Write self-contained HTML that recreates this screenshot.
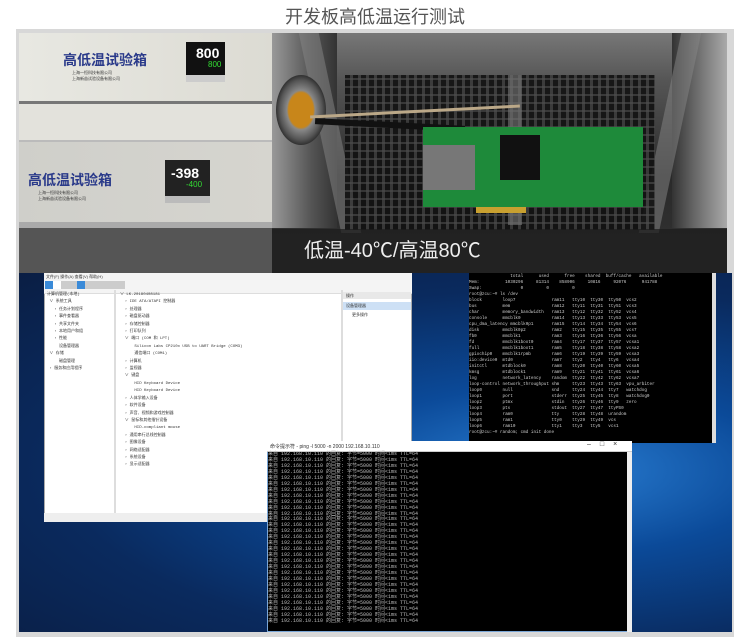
<!DOCTYPE html>
<html><head><meta charset="utf-8"><style>
*{margin:0;padding:0;box-sizing:border-box}
body{width:750px;height:641px;background:#fff;position:relative;overflow:hidden;font-family:"Liberation Sans","Noto Sans CJK SC",sans-serif}
.a{position:absolute}
.t{left:0;width:750px;top:3px;text-align:center;font-size:18px;color:#555}
pre{font-family:"Liberation Mono","Noto Sans CJK SC",monospace;white-space:pre;}
</style></head><body>
<div class="a t">开发板高低温运行测试</div>
<div class="a" style="left:16px;top:29px;width:718px;height:608px;background:#d8d8d8"></div>
<!-- left photo -->
<div class="a" style="left:19px;top:33px;width:253px;height:240px;background:#e2e1da"></div>
<div class="a" style="left:19px;top:33px;width:253px;height:69px;background:linear-gradient(90deg,#e8e8e2,#dcdbd3)"></div>
<div class="a" style="left:19px;top:101px;width:253px;height:3px;background:#777"></div>
<div class="a" style="left:19px;top:104px;width:253px;height:36px;background:#e3e2dc"></div>
<div class="a" style="left:19px;top:140px;width:253px;height:2px;background:#bbb"></div>
<div class="a" style="left:19px;top:142px;width:253px;height:82px;background:linear-gradient(90deg,#cfcfca,#d6d5cf)"></div>
<div class="a" style="left:19px;top:222px;width:253px;height:6px;background:#aaa"></div>
<div class="a" style="left:19px;top:228px;width:253px;height:45px;background:#555"></div>
<div class="a" style="left:63px;top:50px;font-size:14px;font-weight:bold;color:#2a3a8a">高低温试验箱</div>
<div class="a" style="left:72px;top:70px;font-size:4px;color:#333;line-height:6px">上海一恒科技有限公司<br>上海新苗试验设备有限公司</div>
<div class="a" style="left:28px;top:170px;font-size:14px;font-weight:bold;color:#2a3a8a">高低温试验箱</div>
<div class="a" style="left:38px;top:190px;font-size:4px;color:#333;line-height:6px">上海一恒科技有限公司<br>上海新苗试验设备有限公司</div>
<div class="a" style="left:186px;top:42px;width:39px;height:40px;background:#111;border-bottom:7px solid #ccc"></div>
<div class="a" style="left:196px;top:45px;font-size:14px;color:#fff;font-weight:bold">800</div>
<div class="a" style="left:208px;top:60px;font-size:8px;color:#3d3">800</div>
<div class="a" style="left:165px;top:160px;width:45px;height:43px;background:#222;border-bottom:7px solid #bbb"></div>
<div class="a" style="left:171px;top:165px;font-size:14px;color:#fff;font-weight:bold">-398</div>
<div class="a" style="left:186px;top:180px;font-size:8px;color:#3d3">-400</div>
<!-- right photo -->
<div class="a" style="left:272px;top:33px;width:455px;height:240px;background:linear-gradient(180deg,#777 0%,#555 20%,#2a2a2a 60%,#333 100%)"></div>
<div class="a" style="left:272px;top:33px;width:65px;height:195px;background:linear-gradient(90deg,#999,#555 60%,#333)"></div>
<div class="a" style="left:672px;top:33px;width:55px;height:195px;background:linear-gradient(90deg,#333,#666 40%,#aaa)"></div>
<div class="a" style="left:320px;top:33px;width:20px;height:200px;background:#888;opacity:.5;transform:skewX(12deg)"></div>
<div class="a" style="left:660px;top:33px;width:20px;height:200px;background:#888;opacity:.5;transform:skewX(-12deg)"></div>
<div class="a" style="left:345px;top:75px;width:310px;height:155px;background:repeating-linear-gradient(0deg,transparent 0 6px,rgba(80,80,80,.6) 6px 8px),repeating-linear-gradient(90deg,#111 0 5px,#3a3a3a 5px 8px),#222;opacity:.9"></div>
<div class="a" style="left:508px;top:75px;width:14px;height:150px;background:#777;opacity:.6"></div>
<div class="a" style="left:276px;top:75px;width:50px;height:70px;border-radius:50%;background:radial-gradient(#c8861a 35%,#888 40%,#555 60%,#333 70%)"></div>
<div class="a" style="left:310px;top:110px;width:210px;height:3px;background:#bba888;transform:rotate(-3deg)"></div>
<div class="a" style="left:315px;top:122px;width:150px;height:6px;background:#111;transform:rotate(3deg)"></div>
<div class="a" style="left:423px;top:127px;width:220px;height:80px;background:#1e8a3a"></div>
<div class="a" style="left:423px;top:145px;width:52px;height:45px;background:#777"></div>
<div class="a" style="left:500px;top:135px;width:40px;height:45px;background:#111"></div>
<div class="a" style="left:476px;top:207px;width:50px;height:6px;background:#c8a030"></div>
<div class="a" style="left:272px;top:229px;width:455px;height:44px;background:rgba(30,30,30,.75)"></div>
<div class="a" style="left:304px;top:234px;font-size:20px;color:#eee">低温-40℃/高温80℃</div>
<!-- desktop -->
<div class="a" style="left:19px;top:273px;width:713px;height:359px;background:radial-gradient(ellipse at 75% 55%,#2a7fd4 0%,#0b4a99 30%,#0a2a5e 65%,#0a1e44 100%)"></div>
<!-- device manager -->
<div class="a" style="left:44px;top:273px;width:368px;height:249px;background:#fff;border:1px solid #aaa"></div>
<div class="a" style="left:44px;top:273px;width:368px;height:21px;background:#f4f4f4;border-bottom:1px solid #ddd"></div>
<div class="a" style="left:46px;top:274px;font-size:4px;color:#333">文件(F) 操作(A) 查看(V) 帮助(H)</div>
<div class="a" style="left:45px;top:281px;width:80px;height:8px;background:linear-gradient(90deg,#3a8ad8 0 10%,#fff 10% 20%,#ccc 20% 40%,#3a8ad8 40% 50%,#ccc 50%)"></div>
<div class="a" style="left:114px;top:290px;width:2px;height:223px;background:#ddd"></div>
<div class="a" style="left:341px;top:290px;width:2px;height:223px;background:#ddd"></div>
<div class="a" style="left:343px;top:292px;width:68px;height:7px;background:#e8e8e8"></div>
<div class="a" style="left:343px;top:302px;width:68px;height:8px;background:#cde0f5"></div>
<div class="a" style="left:44px;top:513px;width:368px;height:9px;background:#eee"></div>
<pre class="a" style="left:47px;top:292px;font-size:4px;line-height:7.4px;color:#333">计算机管理(本地)
 ∨ 系统工具
   › 任务计划程序
   › 事件查看器
   › 共享文件夹
   › 本地用户和组
   › 性能
     设备管理器
 ∨ 存储
     磁盘管理
 › 服务和应用程序</pre>
<pre class="a" style="left:120px;top:292px;font-size:4px;line-height:7.4px;color:#333">∨ LK-20180408181
  › IDE ATA/ATAPI 控制器
  › 处理器
  › 磁盘驱动器
  › 存储控制器
  › 打印队列
  ∨ 端口 (COM 和 LPT)
      Silicon Labs CP210x USB to UART Bridge (COM3)
      通信端口 (COM1)
  › 计算机
  › 监视器
  ∨ 键盘
      HID Keyboard Device
      HID Keyboard Device
  › 人体学输入设备
  › 软件设备
  › 声音、视频和游戏控制器
  ∨ 鼠标和其他指针设备
      HID-compliant mouse
  › 通用串行总线控制器
  › 图像设备
  › 网络适配器
  › 系统设备
  › 显示适配器</pre>
<div class="a" style="left:346px;top:293px;font-size:4px;color:#333">操作</div>
<div class="a" style="left:346px;top:303px;font-size:4px;color:#333">设备管理器</div>
<div class="a" style="left:352px;top:312px;font-size:4px;color:#333">更多操作</div>
<!-- terminal -->
<div class="a" style="left:469px;top:273px;width:247px;height:170px;background:#000;border-right:4px solid #ddd"></div>
<pre class="a" style="left:469px;top:274px;font-size:4.3px;line-height:6px;color:#ccc">                total      used      free    shared  buff/cache   available
Mem:          1030296     81314    858906     10816     92076      941788
Swap:               0         0         0
root@zcu:~# ls /dev
block        loop7              ram11   tty10  tty30  tty50  vcs2
bus          mem                ram12   tty11  tty31  tty51  vcs3
char         memory_bandwidth   ram13   tty12  tty32  tty52  vcs4
console      mmcblk0            ram14   tty13  tty33  tty53  vcs5
cpu_dma_latency mmcblk0p1       ram15   tty14  tty34  tty54  vcs6
disk         mmcblk0p2          ram2    tty15  tty35  tty55  vcs7
fb0          mmcblk1            ram3    tty16  tty36  tty56  vcsa
fd           mmcblk1boot0       ram4    tty17  tty37  tty57  vcsa1
full         mmcblk1boot1       ram5    tty18  tty38  tty58  vcsa2
gpiochip0    mmcblk1rpmb        ram6    tty19  tty39  tty59  vcsa3
iio:device0  mtd0               ram7    tty2   tty4   tty6   vcsa4
initctl      mtdblock0          ram8    tty20  tty40  tty60  vcsa5
kmsg         mtdblock1          ram9    tty21  tty41  tty61  vcsa6
log          network_latency    random  tty22  tty42  tty62  vcsa7
loop-control network_throughput shm     tty23  tty43  tty63  vpu_arbiter
loop0        null               snd     tty24  tty44  tty7   watchdog
loop1        port               stderr  tty25  tty45  tty8   watchdog0
loop2        ptmx               stdin   tty26  tty46  tty9   zero
loop3        pts                stdout  tty27  tty47  ttyPS0
loop4        ram0               tty     tty28  tty48  urandom
loop5        ram1               tty0    tty29  tty49  vcs
loop6        ram10              tty1    tty3   tty5   vcs1
root@zcu:~# random; cmd init done</pre>
<!-- cmd -->
<div class="a" style="left:267px;top:441px;width:365px;height:191px;background:#000;border:1px solid #7aa7d8"></div>
<div class="a" style="left:267px;top:441px;width:365px;height:11px;background:#fff;border-bottom:1px solid #ccc"></div>
<div class="a" style="left:270px;top:443px;font-size:5px;color:#333">命令提示符 - ping -l 5000 -n 2000 192.168.10.110</div>
<div class="a" style="left:587px;top:441px;font-size:7px;color:#333;letter-spacing:9px">–□×</div>
<div class="a" style="left:627px;top:452px;width:5px;height:180px;background:#eee"></div>
<pre class="a" style="left:268px;top:452px;font-size:5px;line-height:5.95px;color:#bbb">来自 192.168.10.110 的回复: 字节=5000 时间<1ms TTL=64
来自 192.168.10.110 的回复: 字节=5000 时间<1ms TTL=64
来自 192.168.10.110 的回复: 字节=5000 时间<1ms TTL=64
来自 192.168.10.110 的回复: 字节=5000 时间<1ms TTL=64
来自 192.168.10.110 的回复: 字节=5000 时间<1ms TTL=64
来自 192.168.10.110 的回复: 字节=5000 时间<1ms TTL=64
来自 192.168.10.110 的回复: 字节=5000 时间<1ms TTL=64
来自 192.168.10.110 的回复: 字节=5000 时间<1ms TTL=64
来自 192.168.10.110 的回复: 字节=5000 时间<1ms TTL=64
来自 192.168.10.110 的回复: 字节=5000 时间<1ms TTL=64
来自 192.168.10.110 的回复: 字节=5000 时间<1ms TTL=64
来自 192.168.10.110 的回复: 字节=5000 时间<1ms TTL=64
来自 192.168.10.110 的回复: 字节=5000 时间<1ms TTL=64
来自 192.168.10.110 的回复: 字节=5000 时间<1ms TTL=64
来自 192.168.10.110 的回复: 字节=5000 时间<1ms TTL=64
来自 192.168.10.110 的回复: 字节=5000 时间<1ms TTL=64
来自 192.168.10.110 的回复: 字节=5000 时间<1ms TTL=64
来自 192.168.10.110 的回复: 字节=5000 时间<1ms TTL=64
来自 192.168.10.110 的回复: 字节=5000 时间<1ms TTL=64
来自 192.168.10.110 的回复: 字节=5000 时间<1ms TTL=64
来自 192.168.10.110 的回复: 字节=5000 时间<1ms TTL=64
来自 192.168.10.110 的回复: 字节=5000 时间<1ms TTL=64
来自 192.168.10.110 的回复: 字节=5000 时间<1ms TTL=64
来自 192.168.10.110 的回复: 字节=5000 时间<1ms TTL=64
来自 192.168.10.110 的回复: 字节=5000 时间<1ms TTL=64
来自 192.168.10.110 的回复: 字节=5000 时间<1ms TTL=64
来自 192.168.10.110 的回复: 字节=5000 时间<1ms TTL=64
来自 192.168.10.110 的回复: 字节=5000 时间<1ms TTL=64
来自 192.168.10.110 的回复: 字节=5000 时间<1ms TTL=64</pre>
</body></html>
